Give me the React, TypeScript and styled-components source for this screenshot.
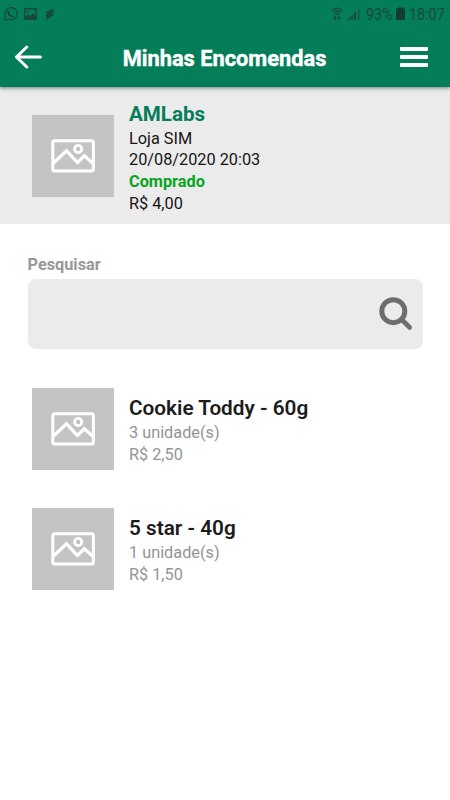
import React from "react";
import styled, { createGlobalStyle } from "styled-components";

const Global = createGlobalStyle`
  * { box-sizing: border-box; }
  body { margin: 0; background: #fff; font-family: Roboto, sans-serif; }
`;

const Screen = styled.div`
  width: 450px;
  height: 800px;
  background: #fff;
  overflow: hidden;
`;

const Header = styled.header`
  position: relative;
  height: 87px;
  background: #047d59;
  box-shadow: 0 1px 4px rgba(0, 0, 0, 0.5);
`;

const StatusBar = styled.div`
  display: flex;
  justify-content: space-between;
  height: 27px;
  padding: 0 4px 0 4px;
  color: #17483a;
`;

const StatusGroup = styled.div<{ $gap: number }>`
  display: flex;
  align-items: center;
  gap: ${(p) => p.$gap}px;
`;

const StatusText = styled.span<{ $width: number }>`
  width: ${(p) => p.$width}px;
  font-size: 16.5px;
  line-height: 27px;
  white-space: nowrap;
  transform: translateY(0.5px) scaleX(0.87);
  transform-origin: left center;
`;

const NavBar = styled.div`
  display: flex;
  align-items: center;
  justify-content: space-between;
  height: 60px;
  padding: 0 21px 0 14px;
`;

const NavButton = styled.button`
  display: flex;
  padding: 0;
  border: 0;
  background: none;
  color: #fff;
`;

const Title = styled.h1`
  margin: 3px 0 0 7px;
  color: #fff;
  font-size: 21.8px;
  font-weight: 700;
  line-height: 28px;
  white-space: nowrap;
  -webkit-text-stroke: 0.4px #fff;
`;

const Summary = styled.section`
  display: flex;
  gap: 15px;
  height: 137px;
  padding: 13px 32px 0;
  background: #ebebeb;
`;

const Thumb = styled.div<{ $top: number }>`
  display: flex;
  align-items: center;
  justify-content: center;
  flex: none;
  width: 82px;
  height: 82px;
  margin-top: ${(p) => p.$top}px;
  background: #c4c4c4;
`;

const Info = styled.div`
  display: flex;
  flex-direction: column;
  padding-top: 0.6px;
  white-space: nowrap;
`;

const Name = styled.h2<{ $color: string; $weight: number; $size: number }>`
  margin: 0;
  color: ${(p) => p.$color};
  font-size: ${(p) => p.$size}px;
  font-weight: ${(p) => p.$weight};
  line-height: 27px;
`;

const Line = styled.span<{ $color: string; $bold?: boolean }>`
  color: ${(p) => p.$color};
  font-size: 16.3px;
  font-weight: ${(p) => (p.$bold ? 700 : 400)};
  line-height: 21.8px;
`;

const Search = styled.label`
  display: block;
  padding: 31px 27px 0 27.5px;
`;

const SearchLabel = styled.span`
  display: block;
  height: 24.4px;
  color: #989898;
  font-size: 16.3px;
  font-weight: 700;
  line-height: 20px;
`;

const SearchField = styled.div`
  display: flex;
  align-items: center;
  justify-content: flex-end;
  height: 70px;
  padding-right: 10px;
  border-radius: 8px;
  background: #ebebeb;
`;

const Products = styled.ul`
  display: flex;
  flex-direction: column;
  gap: 38px;
  margin: 38.6px 0 0;
  padding: 0 32px;
  list-style: none;
`;

const Product = styled.li`
  display: flex;
  gap: 15px;
  height: 82px;
`;

const ProductInfo = styled(Info)`
  padding-top: 7px;
`;

const Picture = () => (
  <svg width="44" height="34" viewBox="0 0 44 34" fill="none" stroke="#fff" strokeWidth="3" strokeLinejoin="round">
    <rect x="1.8" y="1.8" width="40.6" height="30.2" rx="2" />
    <path d="M2 24.5 15.5 11.8 26.5 23.5 33.3 16.8 42 24.5" strokeWidth="3.2" strokeLinejoin="miter" />
    <circle cx="27.2" cy="10" r="3.6" strokeWidth="2.8" />
  </svg>
);

const products = [
  { name: "Cookie Toddy - 60g", units: "3 unidade(s)", price: "R$ 2,50" },
  { name: "5 star - 40g", units: "1 unidade(s)", price: "R$ 1,50" },
];

export default function App() {
  return (
    <Screen>
      <Global />
      <Header>
        <StatusBar>
          <StatusGroup $gap={6}>
            <svg width="14" height="14" viewBox="0 0 14 14" fill="none" stroke="currentColor" strokeWidth="1.2">
              <path d="M.8 13.2 1.7 9.9A6.2 6.2 0 1 1 4.2 12.3Z" />
              <path d="M4.4 3.8Q3.6 6.2 6 8.2T10 9.7" strokeWidth="1.9" />
            </svg>
            <svg width="13" height="12" viewBox="0 0 13 12">
              <path fill="currentColor" fillRule="evenodd" d="M1 0h11q1 0 1 1v10q0 1-1 1H1q-1 0-1-1V1q0-1 1-1Zm.5 1.5V9l2.7-3L6.5 8 9 5l2.5 3V1.5Zm2 1.2a1 1 0 1 1 0 2 1 1 0 0 1 0-2Z" />
            </svg>
            <svg width="14" height="14" viewBox="0 0 14 14">
              <path fill="currentColor" d="M11.6 1 3 4.8 3.8 7.6 2 8.8 4.2 10.2 2 13.6 11 8 9.4 6.4 11.8 4.2 9.6 3.6Z" />
            </svg>
          </StatusGroup>
          <StatusGroup $gap={4}>
            <svg width="31" height="14" viewBox="0 0 31 14" fill="none" stroke="currentColor" strokeWidth="1.3">
              <path d="M.5 3.7Q6 -1.2 11.5 3.7M2.3 5.7Q6 2.3 9.7 5.7M4 7.6Q6 5.8 8 7.6" />
              <path fill="currentColor" stroke="none" d="m4 8.8 2 2H4.8V13H3.2v-2.2H2Zm4 4.2-2-2h1.2V8.8h1.6V11H10Z" />
              <path fill="currentColor" stroke="none" d="M17 13v-1.5l2-1.8V13Zm3 0V9l2-1.6V13Zm3 0V6l2-2v9Z" />
              <path fill="currentColor" stroke="none" opacity=".45" d="M26.5 13V3.5L29 1.2V13Z" />
            </svg>
            <StatusText $width={26.5}>93%</StatusText>
            <svg width="9" height="13" viewBox="0 0 9 13">
              <path fill="#123c30" d="M2 .5h5v1h2V13H0V1.5h2Z" />
            </svg>
            <StatusText $width={37}>18:07</StatusText>
          </StatusGroup>
        </StatusBar>
        <NavBar>
          <NavButton aria-label="Voltar">
            <svg width="28" height="24" viewBox="0 0 28 24" fill="none" stroke="currentColor" strokeWidth="3" strokeLinecap="round" strokeLinejoin="round">
              <path d="M12.8 2 2.4 12 12.8 22M3 12H26.4" />
            </svg>
          </NavButton>
          <Title>Minhas Encomendas</Title>
          <NavButton aria-label="Menu">
            <svg width="29" height="20" viewBox="0 0 29 20" fill="currentColor">
              <rect width="28" height="4" rx="1" />
              <rect y="8" width="28" height="4" rx="1" />
              <rect y="16" width="28" height="4" rx="1" />
            </svg>
          </NavButton>
        </NavBar>
      </Header>
      <Summary>
        <Thumb $top={15}><Picture /></Thumb>
        <Info>
          <Name $color="#067d59" $weight={700} $size={20.6}>AMLabs</Name>
          <Line $color="#161616">Loja SIM</Line>
          <Line $color="#161616">20/08/2020 20:03</Line>
          <Line $color="#07a51e" $bold>Comprado</Line>
          <Line $color="#161616">R$ 4,00</Line>
        </Info>
      </Summary>
      <Search>
        <SearchLabel>Pesquisar</SearchLabel>
        <SearchField>
          <svg width="34" height="34" viewBox="0 0 34 34" fill="none" stroke="#6d6d6d">
            <circle cx="14.3" cy="14.2" r="11.5" strokeWidth="5" />
            <path d="m23 22.8 7.6 7.6" strokeWidth="4.8" strokeLinecap="round" />
          </svg>
        </SearchField>
      </Search>
      <Products>
        {products.map((p) => (
          <Product key={p.name}>
            <Thumb $top={0}><Picture /></Thumb>
            <ProductInfo>
              <Name $color="#1c1c1c" $weight={600} $size={20.75}>{p.name}</Name>
              <Line $color="#949494">{p.units}</Line>
              <Line $color="#949494">{p.price}</Line>
            </ProductInfo>
          </Product>
        ))}
      </Products>
    </Screen>
  );
}
